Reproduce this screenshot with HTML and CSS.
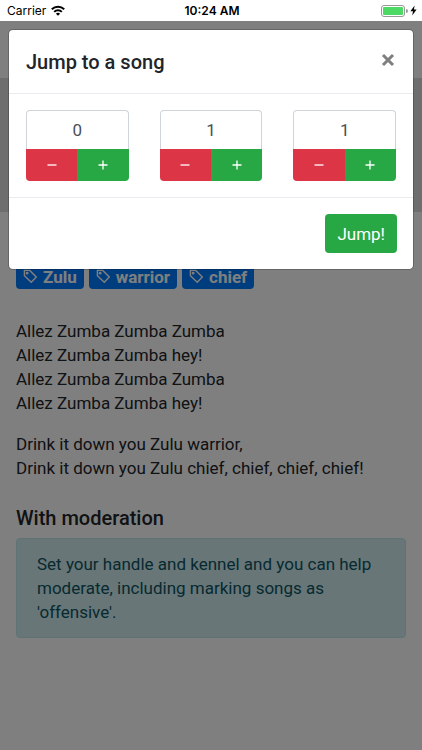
FILE: index.html
```html
<!DOCTYPE html>
<html lang="en">
<head>
  <meta charset="UTF-8" />
  <meta name="viewport" content="width=device-width, initial-scale=1.0" />
  <title>Jump to a song</title>
  <link rel="stylesheet" href="styles.css">
</head>
<body>
  <header class="status-bar">
    <div class="status-left">
      <span>Carrier</span>
      <svg width="14" height="11" viewBox="0 0 14 11" fill="none" stroke="#000" stroke-width="2">
        <path d="M0.8 4.2a8.8 8.8 0 0 1 12.4 0" />
        <path d="M3.2 6.9a5.4 5.4 0 0 1 7.6 0" />
        <path d="M7 10.8L4.9 8.7a3 3 0 0 1 4.2 0z" fill="#000" stroke="none" />
      </svg>
    </div>
    <div class="status-time">10:24 AM</div>
    <div class="status-right">
      <svg width="27" height="12" viewBox="0 0 27 12">
        <rect x="0.5" y="0.5" width="23" height="11" rx="2.5" fill="#fff" stroke="#999" />
        <rect x="2" y="2" width="20" height="8" rx="1" fill="#4cd964" />
        <path d="M25 4a2 2 0 0 1 0 4z" fill="#999" />
      </svg>
      <svg width="7" height="11" viewBox="0 0 7 11">
        <path d="M4.6 0.5L0.4 6.2H3L2.2 10.5L6.6 4.6H3.9z" fill="#000" />
      </svg>
    </div>
  </header>

  <div class="screen">
    <main class="page">
      <nav class="navbar"></nav>
      <div class="jumbotron"></div>
      <div class="container">
        <div class="tags">
          <a class="badge" href="#zulu"><svg class="tag-icon" viewBox="0 0 16 16"><path d="M1.5 1.5h5.7l7 7-5.4 5.7-7.3-7z" /><circle cx="4.4" cy="4.4" r="0.8" /></svg>Zulu</a>
          <a class="badge" href="#warrior"><svg class="tag-icon" viewBox="0 0 16 16"><path d="M1.5 1.5h5.7l7 7-5.4 5.7-7.3-7z" /><circle cx="4.4" cy="4.4" r="0.8" /></svg>warrior</a>
          <a class="badge" href="#chief"><svg class="tag-icon" viewBox="0 0 16 16"><path d="M1.5 1.5h5.7l7 7-5.4 5.7-7.3-7z" /><circle cx="4.4" cy="4.4" r="0.8" /></svg>chief</a>
        </div>
        <p>
          Allez Zumba Zumba Zumba<br>
          Allez Zumba Zumba hey!<br>
          Allez Zumba Zumba Zumba<br>
          Allez Zumba Zumba hey!
        </p>
        <p>
          Drink it down you Zulu warrior,<br>
          Drink it down you Zulu chief, chief, chief, chief!
        </p>
        <h5>With moderation</h5>
        <div class="alert">Set your handle and kennel and you can help moderate, including marking songs as 'offensive'.</div>
      </div>
    </main>

    <div class="backdrop">
      <form class="modal" role="dialog" aria-labelledby="modalTitle">
        <div class="modal-header">
          <h5 id="modalTitle">Jump to a song</h5>
          <button type="button" class="close" aria-label="Close">
            <svg width="14" height="14" viewBox="0 0 14 14"><path d="M2 2l10 10M12 2L2 12" /></svg>
          </button>
        </div>
        <div class="modal-body">
          <div class="digit">
            <input type="text" inputmode="numeric" value="0" aria-label="Hundreds">
            <div class="btn-group">
              <button type="button" class="btn-minus" aria-label="Decrease hundreds"><svg width="10" height="10" viewBox="0 0 10 10"><path d="M0.5 5h9" /></svg></button>
              <button type="button" class="btn-plus" aria-label="Increase hundreds"><svg width="10" height="10" viewBox="0 0 10 10"><path d="M0.5 5h9M5 0.5v9" /></svg></button>
            </div>
          </div>
          <div class="digit">
            <input type="text" inputmode="numeric" value="1" aria-label="Tens">
            <div class="btn-group">
              <button type="button" class="btn-minus" aria-label="Decrease tens"><svg width="10" height="10" viewBox="0 0 10 10"><path d="M0.5 5h9" /></svg></button>
              <button type="button" class="btn-plus" aria-label="Increase tens"><svg width="10" height="10" viewBox="0 0 10 10"><path d="M0.5 5h9M5 0.5v9" /></svg></button>
            </div>
          </div>
          <div class="digit">
            <input type="text" inputmode="numeric" value="1" aria-label="Units">
            <div class="btn-group">
              <button type="button" class="btn-minus" aria-label="Decrease units"><svg width="10" height="10" viewBox="0 0 10 10"><path d="M0.5 5h9" /></svg></button>
              <button type="button" class="btn-plus" aria-label="Increase units"><svg width="10" height="10" viewBox="0 0 10 10"><path d="M0.5 5h9M5 0.5v9" /></svg></button>
            </div>
          </div>
        </div>
        <div class="modal-footer">
          <button type="submit" class="btn-jump">Jump!</button>
        </div>
      </form>
    </div>
  </div>
</body>
</html>
```
FILE: styles.css
```css
* {
  box-sizing: border-box;
}

body {
  margin: 0;
  min-height: 100vh;
  display: flex;
  flex-direction: column;
  font-family: Roboto, "Liberation Sans", sans-serif;
  font-size: 17px;
  line-height: 24px;
  color: #212529;
  background-color: #fff;
}

button,
input {
  font: inherit;
}

/* Status bar */
.status-bar {
  display: grid;
  grid-template-columns: 1fr auto 1fr;
  align-items: center;
  height: 21px;
  padding: 0 5px 0 7px;
  font-family: Inter, "Liberation Sans", sans-serif;
  font-size: 12px;
  line-height: 20px;
  color: #000;
}

.status-left,
.status-right {
  display: flex;
  align-items: center;
  gap: 5px;
}

.status-right {
  justify-content: flex-end;
  gap: 2px;
}

.status-time {
  font-weight: 600;
}

/* Page */
.screen {
  position: relative;
  flex: 1;
}

.navbar {
  height: 57px;
}

.jumbotron {
  height: 134px;
  background-color: #dcdcdc;
}

.container {
  padding: 52px 16px 16px;
}

.tags {
  display: flex;
  flex-wrap: wrap;
  gap: 5px;
  margin-bottom: 30px;
}

.badge {
  display: flex;
  align-items: center;
  gap: 5px;
  height: 25px;
  padding: 0 7px;
  border-radius: 4px;
  background-color: #007bff;
  color: #fff;
  font-weight: 700;
  text-decoration: none;
}

.tag-icon {
  width: 15px;
  height: 15px;
  fill: none;
  stroke: #fff;
  stroke-width: 1.5;
}

p {
  margin: 0 0 17px;
}

h5 {
  margin: 0;
  font-size: 20px;
  line-height: 24px;
  font-weight: 500;
}

.container h5 {
  margin: 26px 0 8px;
}

.alert {
  padding: 13px 20px;
  border: 1px solid #bee5eb;
  border-radius: 4px;
  background-color: #d1ecf1;
  color: #0c5460;
}

/* Modal */
.backdrop {
  position: absolute;
  inset: 0;
  padding: 8px;
  background-color: rgba(0, 0, 0, 0.5);
}

.modal {
  border: 1px solid rgba(0, 0, 0, 0.2);
  border-radius: 5px;
  background-color: #fff;
  background-clip: padding-box;
}

.modal-header {
  display: flex;
  align-items: center;
  justify-content: space-between;
  height: 64px;
  padding: 0 17px;
  border-bottom: 1px solid #e9ecef;
}

.close {
  display: flex;
  padding: 0 1px 4px;
  border: none;
  background: none;
  cursor: pointer;
}

.close svg {
  stroke: #7f7f7f;
  stroke-width: 3;
}

.modal-body {
  display: grid;
  grid-template-columns: repeat(3, 1fr);
  gap: 31px;
  padding: 16px 17px;
}

.digit input {
  display: block;
  width: 100%;
  height: 39px;
  padding: 0;
  border: 1px solid #ced4da;
  border-bottom: none;
  border-radius: 4px 4px 0 0;
  background-color: #fff;
  color: #495057;
  text-align: center;
}

.btn-group {
  display: flex;
}

.btn-group button {
  display: flex;
  flex: 1;
  align-items: center;
  justify-content: center;
  height: 32px;
  padding: 0;
  border: none;
  cursor: pointer;
}

.btn-group svg {
  stroke: #fff;
  stroke-width: 1.3;
}

.btn-group .btn-minus {
  border-radius: 0 0 0 4px;
  background-color: #dc3545;
}

.btn-group .btn-plus {
  border-radius: 0 0 4px 0;
  background-color: #28a745;
}

.modal-footer {
  display: flex;
  justify-content: flex-end;
  padding: 16px;
  border-top: 1px solid #e9ecef;
}

.btn-jump {
  height: 39px;
  padding: 0 12px;
  border: none;
  border-radius: 4px;
  background-color: #28a745;
  color: #fff;
  cursor: pointer;
}
```
